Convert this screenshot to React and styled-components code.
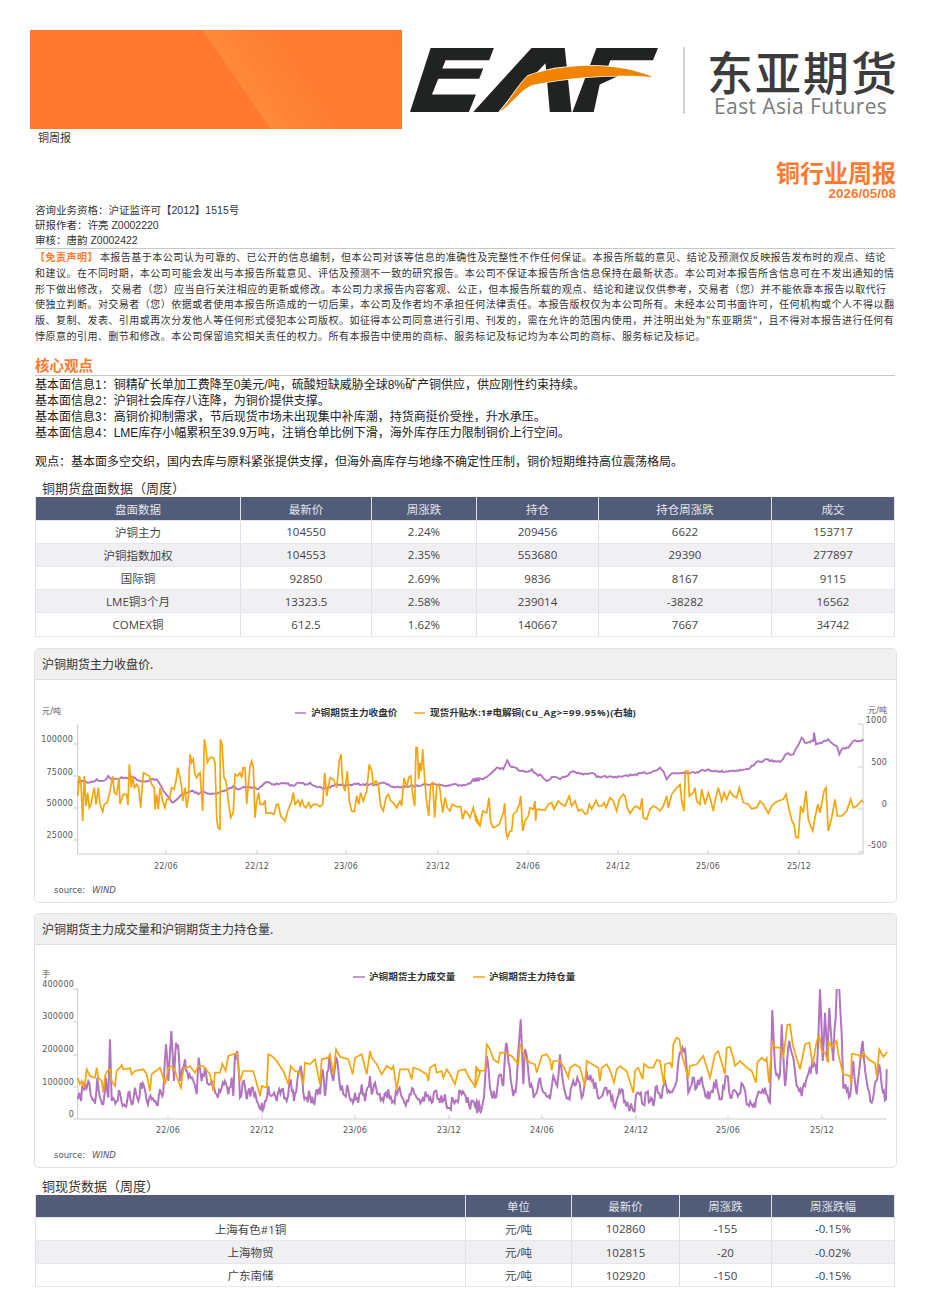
import styled, {createGlobalStyle} from "styled-components";

const CJK = `"Noto Sans CJK SC", "Liberation Sans", sans-serif`;
const LATIN_CJK = `"Open Sans", "Noto Sans CJK SC", sans-serif`;
const ARIAL_CJK = `"Liberation Sans", "Noto Sans CJK SC", sans-serif`;

const disclaimerLines = [
  "本报告基于本公司认为可靠的、已公开的信息编制，但本公司对该等信息的准确性及完整性不作任何保证。本报告所载的意见、结论及预测仅反映报告发布时的观点、结论",
  "和建议。在不同时期，本公司可能会发出与本报告所载意见、评估及预测不一致的研究报告。本公司不保证本报告所含信息保持在最新状态。本公司对本报告所含信息可在不发出通知的情",
  "形下做出修改， 交易者（您）应当自行关注相应的更新或修改。本公司力求报告内容客观、公正，但本报告所载的观点、结论和建议仅供参考，交易者（您）并不能依靠本报告以取代行",
  "使独立判断。对交易者（您）依据或者使用本报告所造成的一切后果，本公司及作者均不承担任何法律责任。本报告版权仅为本公司所有。未经本公司书面许可，任何机构或个人不得以翻",
  "版、复制、发表、引用或再次分发他人等任何形式侵犯本公司版权。如征得本公司同意进行引用、刊发的，需在允许的范围内使用，并注明出处为\"东亚期货\"，且不得对本报告进行任何有",
  "悖原意的引用、删节和修改。本公司保留追究相关责任的权力。所有本报告中使用的商标、服务标记及标记均为本公司的商标、服务标记及标记。",
];

const basics = [
  "基本面信息1：铜精矿长单加工费降至0美元/吨，硫酸短缺威胁全球8%矿产铜供应，供应刚性约束持续。",
  "基本面信息2：沪铜社会库存八连降，为铜价提供支撑。",
  "基本面信息3：高铜价抑制需求，节后现货市场未出现集中补库潮，持货商挺价受挫，升水承压。",
  "基本面信息4：LME库存小幅累积至39.9万吨，注销仓单比例下滑，海外库存压力限制铜价上行空间。",
];

const futuresCols = "206px 131px 105px 122px 173px 123px";
const futuresRows = [
  ["盘面数据", "最新价", "周涨跌", "持仓", "持仓周涨跌", "成交"],
  ["沪铜主力", "104550", "2.24%", "209456", "6622", "153717"],
  ["沪铜指数加权", "104553", "2.35%", "553680", "29390", "277897"],
  ["国际铜", "92850", "2.69%", "9836", "8167", "9115"],
  ["LME铜3个月", "13323.5", "2.58%", "239014", "-38282", "16562"],
  ["COMEX铜", "612.5", "1.62%", "140667", "7667", "34742"],
];

const spotCols = "431px 106px 108px 92px 123px";
const spotRows = [
  ["", "单位", "最新价", "周涨跌", "周涨跌幅"],
  ["上海有色#1铜", "元/吨", "102860", "-155", "-0.15%"],
  ["上海物贸", "元/吨", "102815", "-20", "-0.02%"],
  ["广东南储", "元/吨", "102920", "-150", "-0.15%"],
];

// points are read off 3x crops, so every series is scaled back to page coordinates here
const toPage = (raw, ox, oy) =>
  raw
    .trim()
    .split(/\s+/)
    .map((p) => {
      const [x, y] = p.split(",").map(Number);
      return [ox + x / 3, oy + y / 3];
    });

const jitter = (pts, step, amount) => {
  let seed = 7;
  const rnd = () => {
    seed = (seed * 16807) % 2147483647;
    return seed / 2147483647 - 0.5;
  };
  const out = [];
  for (let i = 0; i < pts.length - 1; i++) {
    const [x0, y0] = pts[i];
    const [x1, y1] = pts[i + 1];
    const n = Math.max(1, Math.round((x1 - x0) / step));
    for (let k = 0; k < n; k++) {
      const t = k / n;
      out.push([x0 + (x1 - x0) * t, y0 + (y1 - y0) * t + (k === 0 ? 0 : rnd() * amount)]);
    }
  }
  out.push(pts[pts.length - 1]);
  return out;
};

const toPath = (pts) => pts.map(([x, y]) => `${x.toFixed(1)},${y.toFixed(1)}`).join(" ");

const priceA = toPage(
  `173,425 190,420 205,425 225,420 230,415 240,420 255,418 265,405 275,415 300,412 330,408 345,410 360,420 380,420 395,415 410,415 420,430 430,450 445,468 458,485 470,475 480,465 500,455 520,450 535,460 550,450 570,460 590,458 610,450 625,445 640,435 655,445 670,438 690,438 705,440 715,445 730,430 740,423 760,430 780,428 800,428 820,435 835,425 860,430 870,425 885,435 905,440 910,445 930,440 950,430 980,433 1000,430 1030,430 1050,430 1075,430 1090,425 1110,435 1140,440 1170,435 1190,433 1220,430 1250,430 1280,435 1300,430 1320,432 1350,428 1362,413 1380,418`,
  20,
  640
);
const priceB = toPage(
  `0,428 10,420 20,412 40,415 60,400 80,380 100,385 112,358 120,375 135,380 150,390 170,392 185,385 200,400 215,405 230,420 250,408 270,415 290,405 305,392 330,398 370,397 380,408 400,406 440,410 470,403 500,403 510,397 540,395 570,380 580,390 590,415 605,397 640,395 680,393 715,385 740,392 780,390 835,385 860,362 880,360 890,355 910,362 930,363 950,338 970,340 985,312 995,290 1005,305 1030,300 1032,275 1038,310 1050,305 1075,295 1090,310 1100,315 1108,340 1115,325 1135,320 1150,300 1170,300 1180,295`,
  470,
  640
);
const basisA = toPage(
  `173,465 178,405 183,430 188,540 193,405 198,495 203,455 208,500 213,490 218,460 223,440 228,490 235,440 240,490 248,512 253,490 262,485 270,450 278,405 283,455 290,460 297,410 300,490 310,460 320,460 324,492 328,370 334,440 338,405 343,440 350,430 356,440 362,500 370,395 378,400 388,405 395,430 403,440 405,505 410,460 415,505 420,440 428,480 435,500 440,475 448,475 455,440 462,445 468,420 473,380 480,410 485,440 488,480 495,440 500,500 505,470 510,340 515,365 520,355 525,400 530,410 535,400 540,395 548,510 553,295 558,320 562,365 570,350 580,350 585,365 590,530 594,560 600,565 601,295 606,310 612,410 618,420 625,480 632,530 640,515 645,400 652,405 660,395 665,410 670,380 675,380 680,490 690,375 695,360 700,380 705,530 710,480 716,455 720,490 730,490 735,478 738,517 750,515 762,520 770,490 775,490 782,525 795,540 803,510 815,480 820,455 825,490 835,478 840,495 846,478 852,495 858,500 866,485 872,500 880,490 890,490 900,497 908,490 914,395 920,465 925,440 930,410 940,415 950,440 958,360 963,340 968,430 975,450 982,390 988,480 995,510 1003,512 1010,465 1016,490 1022,455 1030,480 1040,450 1048,370 1055,390 1060,430 1068,420 1075,430 1082,495 1090,510 1098,470 1105,460 1112,480 1120,485 1130,500 1140,480 1145,495 1152,410 1160,440 1166,410 1172,405 1178,460 1184,495 1188,320 1192,320 1196,415 1200,365 1204,390 1208,325 1212,385 1218,465 1226,525 1232,430 1238,425 1244,530 1250,435 1258,430 1262,465 1268,515 1275,470 1282,500 1290,510 1297,490 1310,497 1322,497 1328,535 1335,510 1342,515 1350,530 1360,500 1368,540 1380,555`,
  20,
  640
);
const basisB = toPage(
  `0,535 10,505 20,540 30,555 38,510 50,515 57,470 62,545 70,560 80,555 88,550 100,515 104,487 108,570 112,590 120,570 125,570 130,520 140,510 148,490 152,465 158,570 165,540 175,525 180,500 190,505 195,480 197,540 200,505 210,505 225,508 235,490 245,485 252,505 265,480 275,490 285,495 298,465 305,495 315,480 325,510 335,505 345,520 352,517 358,490 365,505 378,478 385,495 395,495 402,485 408,500 420,470 430,480 440,510 448,475 460,460 465,465 472,500 480,517 492,500 500,495 510,505 516,472 520,530 530,535 540,505 550,495 560,500 570,510 580,495 590,465 595,500 605,460 620,440 630,430 635,480 642,510 646,390 654,390 658,465 670,455 675,440 680,480 690,490 695,445 705,490 715,455 720,470 730,510 735,480 745,440 755,480 762,455 770,475 780,450 790,465 800,470 808,440 820,485 835,490 845,503 860,500 870,480 880,490 895,517 905,495 915,485 925,480 940,475 948,460 958,510 966,540 972,550 978,590 985,590 992,495 1000,515 1008,450 1015,535 1020,550 1028,570 1035,530 1043,490 1050,515 1062,450 1068,440 1075,570 1085,530 1095,475 1102,525 1115,525 1130,510 1142,475 1150,500 1160,495 1175,478 1180,485`,
  470,
  640
);
const volumeA = toPage(
  `173,565 178,545 183,570 190,520 200,530 205,510 215,560 225,578 232,500 240,560 250,580 258,500 265,560 270,385 275,570 290,570 300,545 305,575 315,585 325,545 335,580 345,530 355,570 362,515 372,525 380,570 395,565 410,582 420,535 430,545 438,400 445,510 454,360 462,510 468,395 474,400 480,510 495,445 505,500 520,510 530,550 536,440 545,510 555,470 565,520 575,510 590,550 605,530 615,510 625,550 635,500 640,555 645,430 652,420 660,560 672,510 680,565 695,530 710,570 722,595 735,570 745,525 755,555 770,570 785,535 800,570 812,505 822,570 832,510 842,465 850,545 860,560 870,555 880,575 890,535 900,550 908,475 915,555 928,440 940,510 948,440 958,510 970,550 985,535 995,565 1005,545 1015,575 1025,520 1035,570 1050,495 1055,550 1065,515 1075,550 1090,570 1105,535 1120,570 1135,535 1150,565 1165,570 1180,535 1190,560 1205,570 1220,555 1235,575 1245,540 1260,575 1275,550 1285,590 1300,570 1325,550 1340,575 1365,585 1370,570 1380,590`,
  20,
  910
);
const volumeB = toPage(
  `0,575 15,585 35,595 42,560 50,435 60,530 75,560 90,490 100,525 108,395 115,450 130,555 140,510 152,325 160,520 165,415 180,530 195,550 210,500 225,545 240,565 250,495 262,525 270,430 280,520 295,560 310,510 322,500 335,560 350,480 365,510 380,535 390,560 405,530 420,540 435,590 445,555 455,535 465,570 490,600 505,545 520,580 530,545 550,585 560,525 575,560 585,510 600,545 620,510 630,425 645,415 655,545 668,500 680,530 695,500 710,560 725,540 738,505 752,565 770,495 785,560 800,545 818,520 830,580 855,590 870,545 885,530 900,575 907,297 915,470 930,490 935,340 945,525 958,390 970,440 980,525 995,555 1005,525 1015,490 1030,465 1040,490 1050,235 1058,450 1065,305 1072,450 1078,290 1090,450 1100,235 1108,235 1115,370 1120,530 1130,540 1140,555 1150,450 1160,550 1178,390 1190,510 1205,575 1215,515 1228,460 1235,525 1248,565 1250,475`,
  470,
  910
);
const holdA = toPage(
  `173,500 180,520 185,510 193,530 200,475 210,495 225,500 230,470 235,500 245,510 250,545 255,495 262,480 270,475 275,510 285,525 290,480 300,470 305,462 310,475 330,472 335,490 345,480 370,475 380,490 390,540 395,490 420,470 430,500 435,520 445,470 455,465 465,480 475,510 483,530 490,475 510,465 525,485 535,465 550,465 570,490 580,540 585,485 600,485 607,458 617,480 625,435 640,430 650,425 660,510 670,480 700,480 720,555 725,525 740,530 745,430 755,435 770,450 790,480 805,520 812,465 825,480 840,485 850,520 855,455 870,460 885,445 900,520 905,445 925,440 930,430 940,490 948,415 960,437 985,445 998,490 1005,440 1025,430 1040,490 1050,420 1055,440 1070,460 1085,490 1100,465 1115,475 1120,465 1130,535 1140,475 1165,475 1175,505 1180,470 1195,475 1220,490 1225,510 1230,470 1245,460 1250,485 1265,480 1270,500 1280,475 1290,490 1305,520 1315,480 1335,475 1350,505 1365,525 1370,470 1380,485`,
  20,
  910
);
const holdB = toPage(
  `0,505 15,530 18,470 30,480 45,478 50,400 60,415 70,445 85,455 90,425 105,425 125,435 145,460 150,400 165,440 180,455 195,460 200,485 215,435 230,430 240,445 245,478 250,450 270,450 285,475 295,500 300,470 315,460 330,470 345,525 350,450 385,470 390,510 395,470 410,460 420,478 432,515 440,475 450,465 470,480 490,545 495,480 505,470 518,505 522,458 535,470 550,470 560,447 570,450 582,520 585,460 600,455 606,470 610,400 620,380 628,385 635,430 655,500 660,465 680,460 700,435 720,500 735,430 745,420 765,490 770,410 780,408 790,440 795,465 810,450 830,470 845,480 858,515 862,455 875,440 885,450 890,442 897,515 906,390 915,410 930,410 940,440 952,342 960,340 968,400 975,425 990,475 1005,400 1018,395 1028,460 1040,390 1048,375 1055,420 1065,425 1075,455 1075,390 1085,410 1100,390 1105,430 1120,490 1140,495 1143,520 1145,428 1165,432 1175,440 1180,425 1195,445 1215,457 1220,495 1228,415 1240,438 1252,422`,
  470,
  910
);

const priceLine = toPath(jitter([...priceA, ...priceB.slice(1)], 1.6, 2));
const basisLine = toPath([...basisA, ...basisB.slice(1)]);
const volumeLine = toPath(jitter([...volumeA, ...volumeB.slice(1)], 1.2, 12));
const holdLine = toPath([...holdA, ...holdB.slice(1)]);

const PURPLE = "#b274be";
const ORANGE = "#f5a60f";

const Logo = () => (
  <LogoMark viewBox="30 27 745 215" preserveAspectRatio="none">
    <path fill="#202322" d="M92 27H282L268 68H137L127 96H250L238 130H115L96 183H228L207 242H30Z" />
    <path fill="#202322" d="M395 27H495L515 242H450L437 78L298 242H220Z" />
    <path fill="#202322" d="M590 27H775L760 68H632L622 98H700L600 150L582 242H518Z" />
    <path
      fill="#f08300"
      stroke="#fff"
      strokeWidth="5"
      paintOrder="stroke"
      d="M298 242C340 190 355 150 385 120C470 84 640 66 760 125C640 112 490 128 395 152C360 170 340 210 298 242Z"
    />
  </LogoMark>
);

const PriceChart = () => (
  <ChartSvg viewBox="35 679 861 222" $h={222}>
    <defs>
      <clipPath id="priceClip">
        <rect x="77" y="723" width="787" height="130" />
      </clipPath>
    </defs>
    <AxisText x="42" y="713">元/吨</AxisText>
    <AxisText x="868" y="712">元/吨</AxisText>
    <polyline points="77.7,723 77.7,853 863,853 863,723" fill="none" stroke="#ccc" strokeWidth="1" />
    {[[739, "100000", 743], [772, "75000", 775], [803, "50000", 807], [835, "25000", 839]].map(([y, t, tick]) => (
      <g key={t}>
        <AxisText x="73" y={y + 2} textAnchor="end">{t}</AxisText>
        <line x1="73" x2="78" y1={tick} y2={tick} stroke="#ccc" />
      </g>
    ))}
    {[[719, "1000", 723], [761, "500", 766], [803, "0", 808], [844, "-500", 851]].map(([y, t, tick]) => (
      <g key={t}>
        <AxisText x="887" y={y + 2.5} textAnchor="end">{t}</AxisText>
        <line x1="863" x2="858" y1={tick} y2={tick} stroke="#ccc" />
      </g>
    ))}
    {[[166, "22/06"], [257, "22/12"], [346, "23/06"], [438, "23/12"], [528, "24/06"], [618, "24/12"], [708, "25/06"], [799, "25/12"]].map(([x, t]) => (
      <g key={t}>
        <line x1={x} x2={x} y1="849" y2="853" stroke="#ccc" />
        <AxisText x={x} y="868" textAnchor="middle">{t}</AxisText>
      </g>
    ))}
    <line x1="295" x2="306" y1="712" y2="712" stroke={PURPLE} strokeWidth="1.5" />
    <LegendText x="311" y="715">沪铜期货主力收盘价</LegendText>
    <line x1="414" x2="425" y1="712" y2="712" stroke={ORANGE} strokeWidth="1.5" />
    <LegendText x="430" y="715">
      现货升贴水:1#电解铜<LegendLatin>(Cu_Ag&gt;=99.95%)</LegendLatin>(右轴)
    </LegendText>
    <g clipPath="url(#priceClip)">
      <polyline points={priceLine} fill="none" stroke={PURPLE} strokeWidth="1.9" />
      <polyline points={basisLine} fill="none" stroke={ORANGE} strokeWidth="1.7" />
    </g>
    <SourceText x="54" y="892">source:</SourceText>
    <SourceText x="92" y="892" fontStyle="italic">WIND</SourceText>
  </ChartSvg>
);

const VolumeChart = () => (
  <ChartSvg viewBox="35 944 861 222" $h={222}>
    <defs>
      <clipPath id="volumeClip">
        <rect x="77" y="988" width="811" height="130" />
      </clipPath>
    </defs>
    <AxisText x="42" y="976">手</AxisText>
    <polyline points="77.7,988 77.7,1118 887,1118" fill="none" stroke="#ccc" strokeWidth="1" />
    {[[984, "400000", 988], [1016, "300000", 1021], [1049, "200000", 1054], [1082, "100000", 1086], [1114, "0", 1118]].map(([y, t, tick]) => (
      <g key={t}>
        <AxisText x="74" y={y + 2} textAnchor="end">{t}</AxisText>
        <line x1="73" x2="78" y1={tick} y2={tick} stroke="#ccc" />
      </g>
    ))}
    {[[168, "22/06"], [262, "22/12"], [355, "23/06"], [449, "23/12"], [542, "24/06"], [636, "24/12"], [728, "25/06"], [822, "25/12"]].map(([x, t]) => (
      <g key={t}>
        <line x1={x} x2={x} y1="1114" y2="1118" stroke="#ccc" />
        <AxisText x={x} y="1132" textAnchor="middle">{t}</AxisText>
      </g>
    ))}
    <line x1="353" x2="365" y1="976" y2="976" stroke={PURPLE} strokeWidth="1.5" />
    <LegendText x="369" y="979">沪铜期货主力成交量</LegendText>
    <line x1="473" x2="485" y1="976" y2="976" stroke={ORANGE} strokeWidth="1.5" />
    <LegendText x="489" y="979">沪铜期货主力持仓量</LegendText>
    <g clipPath="url(#volumeClip)">
      <polyline points={volumeLine} fill="none" stroke={PURPLE} strokeWidth="2" />
      <polyline points={holdLine} fill="none" stroke={ORANGE} strokeWidth="1.7" />
    </g>
    <SourceText x="54" y="1157">source:</SourceText>
    <SourceText x="92" y="1157" fontStyle="italic">WIND</SourceText>
  </ChartSvg>
);

const DataTable = ({cols, rows}) => (
  <TableBox>
    {rows.map((row, i) => (
      <TableRow key={i} $cols={cols} $head={i === 0} $alt={i > 0 && i % 2 === 0}>
        {row.map((cell, j) => (
          <TableCell key={j}>{cell}</TableCell>
        ))}
      </TableRow>
    ))}
  </TableBox>
);

export default function App() {
  return (
    <Page>
      <GlobalStyle />
      <Masthead>
        <Banner />
        <LogoWrap>
          <Logo />
          <LogoDivider />
          <LogoWords>
            <LogoCn>东亚期货</LogoCn>
            <LogoEn>East Asia Futures</LogoEn>
          </LogoWords>
        </LogoWrap>
      </Masthead>
      <BannerCaption>铜周报</BannerCaption>
      <TitleBlock>
        <ReportTitle>铜行业周报</ReportTitle>
        <ReportDate>2026/05/08</ReportDate>
      </TitleBlock>
      <Credits>
        <div>咨询业务资格：沪证监许可【2012】1515号</div>
        <div>研报作者：许亮 Z0002220</div>
        <div>审核：唐韵 Z0002422</div>
      </Credits>
      <Disclaimer>
        {disclaimerLines.map((line, i) => (
          <DisclaimerLine key={i}>
            {i === 0 && <DisclaimerTag>【免责声明】</DisclaimerTag>}
            {line}
          </DisclaimerLine>
        ))}
      </Disclaimer>
      <SectionHeading>核心观点</SectionHeading>
      <Basics>
        {basics.map((line) => (
          <div key={line}>{line}</div>
        ))}
      </Basics>
      <Opinion>观点：基本面多空交织，国内去库与原料紧张提供支撑，但海外高库存与地缘不确定性压制，铜价短期维持高位震荡格局。</Opinion>
      <TableTitle $top={9}>铜期货盘面数据（周度）</TableTitle>
      <DataTable cols={futuresCols} rows={futuresRows} />
      <ChartCard $top={12}>
        <ChartHeader>沪铜期货主力收盘价.</ChartHeader>
        <PriceChart />
      </ChartCard>
      <ChartCard $top={12}>
        <ChartHeader>沪铜期货主力成交量和沪铜期货主力持仓量.</ChartHeader>
        <VolumeChart />
      </ChartCard>
      <TableTitle $top={10}>铜现货数据（周度）</TableTitle>
      <DataTable cols={spotCols} rows={spotRows} />
    </Page>
  );
}

const GlobalStyle = createGlobalStyle`
  html, body {
    margin: 0;
    padding: 0;
    background: #fff;
  }
`;

const Page = styled.div`
  width: 930px;
  height: 1303px;
  overflow: hidden;
  padding: 30px 35px 0;
  box-sizing: border-box;
  font-family: ${CJK};
  color: #333;
`;

const Masthead = styled.header`
  display: flex;
  height: 99px;
  margin-left: -5px;
`;

const Banner = styled.div`
  width: 372px;
  height: 99px;
  flex: none;
  background: linear-gradient(
    55.5deg,
    #ff7a30 0,
    #ff7a30 54.6%,
    #ff8a38 54.8%,
    #ff8335 62%,
    #ff7c32 72%,
    #ff7a30 100%
  );
`;

const LogoWrap = styled.div`
  display: flex;
  align-items: flex-start;
  padding: 18px 0 0 8px;
`;

const LogoMark = styled.svg`
  width: 248px;
  height: 64px;
  flex: none;
`;

const LogoDivider = styled.div`
  width: 2px;
  height: 67px;
  background: #d2d2d2;
  margin: -1px 0 0 24.5px;
`;

const LogoWords = styled.div`
  display: flex;
  flex-direction: column;
  margin: -1px 0 0 22.5px;
`;

const LogoCn = styled.div`
  font-size: 46px;
  line-height: 46px;
  font-weight: 500;
  letter-spacing: 2px;
  color: #3c3c3c;
  white-space: nowrap;
`;

const LogoEn = styled.div`
  font-family: "Open Sans", sans-serif;
  font-size: 21px;
  line-height: 26px;
  font-weight: 400;
  letter-spacing: 0.4px;
  color: #7c7c7c;
  margin-left: 7px;
  white-space: nowrap;
`;

const BannerCaption = styled.div`
  font-size: 11px;
  line-height: 16px;
  color: #333;
  margin: 0 0 0 3px;
`;

const TitleBlock = styled.div`
  display: flex;
  flex-direction: column;
  align-items: flex-end;
  margin: 11px -1px 0 0;
`;

const ReportTitle = styled.div`
  font-size: 24px;
  line-height: 31px;
  font-weight: 700;
  color: #ff7a30;
`;

const ReportDate = styled.div`
  font-family: "Liberation Sans", sans-serif;
  font-size: 13.5px;
  line-height: 14px;
  font-weight: 700;
  color: #ff7a30;
`;

const Credits = styled.div`
  margin-top: 2px;
  font-family: ${ARIAL_CJK};
  font-size: 10.5px;
  line-height: 15px;
  color: #333;
`;

const Disclaimer = styled.div`
  border-top: 1.5px solid #c8c8c8;
  font-size: 10px;
  line-height: 15.8px;
  letter-spacing: 0.48px;
  color: #333;
`;

const DisclaimerLine = styled.div`
  white-space: nowrap;
`;

const DisclaimerTag = styled.span`
  color: #ff7a30;
  font-weight: 700;
  margin-right: 2px;
`;

const SectionHeading = styled.h2`
  margin: 11px 0 0;
  font-size: 14.5px;
  line-height: 20px;
  font-weight: 700;
  color: #ff7a30;
  border-bottom: 1.5px solid #c8c8c8;
`;

const Basics = styled.div`
  margin-top: 2px;
  font-family: ${ARIAL_CJK};
  font-size: 12px;
  line-height: 15.9px;
  color: #222;
`;

const Opinion = styled.div`
  margin-top: 13px;
  font-family: ${ARIAL_CJK};
  font-size: 12px;
  line-height: 16px;
  color: #222;
`;

const TableTitle = styled.div`
  margin-top: ${(p) => p.$top}px;
  padding-left: 7px;
  font-size: 13px;
  line-height: 18px;
  color: #333;
`;

const TableBox = styled.div`
  display: flex;
  flex-direction: column;
  width: 860px;
`;

const TableRow = styled.div`
  display: grid;
  grid-template-columns: ${(p) => p.$cols};
  height: 23.2px;
  box-sizing: border-box;
  border-bottom: 1px solid #e5e7ef;
  background: ${(p) => (p.$head ? "#525c78" : p.$alt ? "#f0f0f3" : "#fff")};
  color: ${(p) => (p.$head ? "#e4e6ee" : "#444")};
`;

const TableCell = styled.div`
  display: flex;
  align-items: center;
  justify-content: center;
  font-family: ${LATIN_CJK};
  font-size: 11.5px;
  border-right: 1px solid #dfe1ea;
  box-sizing: border-box;
  &:first-child {
    border-left: 1px solid #dfe1ea;
  }
`;

const ChartCard = styled.section`
  margin-top: ${(p) => p.$top}px;
  width: 861px;
  border-radius: 4px;
  box-shadow: 0 0 0 1px #e2e2e2;
  background: #fff;
  overflow: hidden;
`;

const ChartHeader = styled.div`
  height: 31px;
  box-sizing: border-box;
  padding-left: 7px;
  font-size: 12px;
  line-height: 30px;
  color: #333;
  background: #f0f0f0;
  border-bottom: 1px solid #dedede;
`;

const ChartSvg = styled.svg`
  display: block;
  width: 861px;
  height: ${(p) => p.$h}px;
`;

const AxisText = styled.text`
  font-family: "DejaVu Sans", "Noto Sans CJK SC", sans-serif;
  font-size: 8px;
  letter-spacing: 0.2px;
  fill: #555;
`;

const LegendText = styled.text`
  font-family: "Open Sans", "Noto Sans CJK SC", sans-serif;
  font-size: 9.6px;
  font-weight: 700;
  fill: #333;
`;

const LegendLatin = styled.tspan`
  letter-spacing: 0.65px;
`;

const SourceText = styled.text`
  font-family: "DejaVu Sans", sans-serif;
  font-size: 8.5px;
  fill: #555;
`;
